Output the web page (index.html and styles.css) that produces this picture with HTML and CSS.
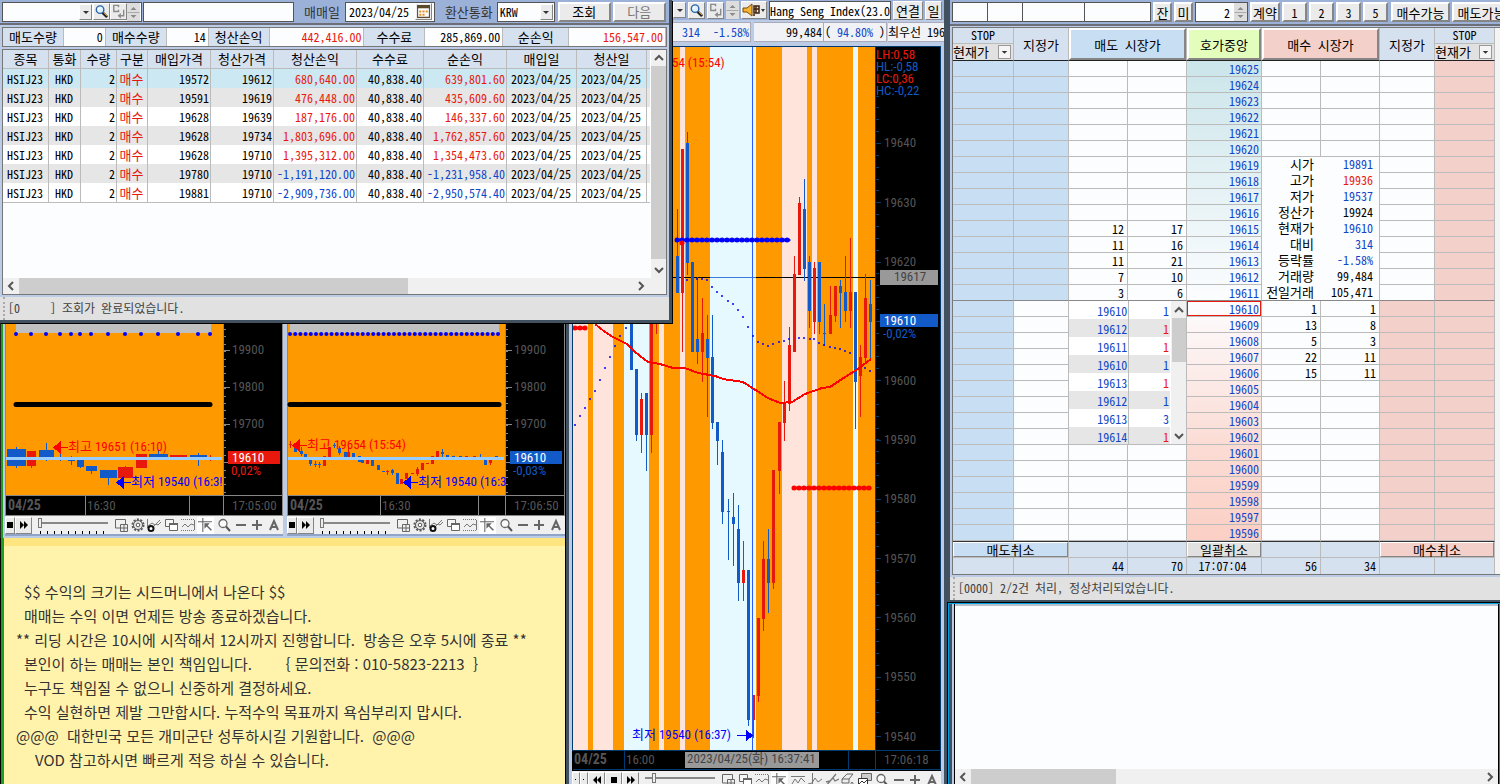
FILE: index.html
```html
<!DOCTYPE html>
<html lang="ko">
<head>
<meta charset="utf-8">
<title>해외선물 트레이딩</title>
<link rel="stylesheet" href="styles.css">
</head>
<body>
<svg class="defs" aria-hidden="true">
  <symbol id="i-down" viewBox="0 0 12 12"><path d="M3 5h6L6 8z" fill="#333"/></symbol>
  <symbol id="i-search" viewBox="0 0 16 16"><path d="M9 9l5 5" stroke="#222" stroke-width="3"/><path d="M10 9l4 4" stroke="#d9a23a" stroke-width="1"/><circle cx="6.500" cy="6" r="4" fill="#dff2fd" stroke="#2a63a8" stroke-width="1.500"/><path d="M4 6l2-2" stroke="#fff" stroke-width="1.500"/></symbol>
  <symbol id="i-code" viewBox="0 0 16 16"><path d="M8 3.500V1.500H3v6.500h5V6" fill="none" stroke="#8a8a8a" stroke-width="1.500"/><path d="M13.500 6v6.500H10" fill="none" stroke="#8a8a8a" stroke-width="1.500"/><path d="M10.500 9.500v6l-3.500-3z" fill="#8a8a8a"/></symbol>
  <symbol id="i-spin" viewBox="0 0 12 18"><path d="M3 7h6L6 4zM3 12h6l-3 3z" fill="#8a8a8a"/><path d="M0 9.500h12" stroke="#aaa"/></symbol>
  <symbol id="i-horn" viewBox="0 0 24 16"><path d="M1 6h4l5-4v12L5 10H1z" fill="#f5b52e" stroke="#7a4a08"/><path d="M12 4h5v7h-5zM14 4v7M12 7h5M12 12v2" fill="none" stroke="#40230a" stroke-width="1.500"/><path d="M19 7h4l-2 3z" fill="#333"/></symbol>
  <symbol id="i-cal" viewBox="0 0 14 14"><path d="M1.500 1.500h11v11h-11z" fill="#fff" stroke="#5b4a2a"/><path d="M1 1h12v3H1z" fill="#5b4a2a"/><path d="M3 6h2v2H3zM6 6h2v2H6zM9 6h2v2H9zM3 9h2v2H3zM6 9h2v2H6z" fill="#e0932b"/></symbol>
  <symbol id="i-up2" viewBox="0 0 10 10"><path d="M1 7l4-4 4 4" fill="none" stroke="#555" stroke-width="2"/></symbol>
  <symbol id="i-dn2" viewBox="0 0 10 10"><path d="M1 3l4 4 4-4" fill="none" stroke="#555" stroke-width="2"/></symbol>
  <symbol id="i-lf2" viewBox="0 0 10 10"><path d="M7 1L3 5l4 4" fill="none" stroke="#555" stroke-width="2"/></symbol>
  <symbol id="i-rt2" viewBox="0 0 10 10"><path d="M3 1l4 4-4 4" fill="none" stroke="#555" stroke-width="2"/></symbol>
  <symbol id="i-stop" viewBox="0 0 14 14"><path d="M4 4h6v6H4z"/></symbol>
  <symbol id="i-dot" viewBox="0 0 14 14"><path d="M6 6h1v1H6z"/></symbol>
  <symbol id="i-ff" viewBox="0 0 14 14"><path d="M3 3l4 4-4 4zM7 3l4 4-4 4z"/></symbol>
  <symbol id="i-rew" viewBox="0 0 14 14"><path d="M7 3L3 7l4 4zM11 3L7 7l4 4z"/></symbol>
  <symbol id="i-add" viewBox="0 0 14 14"><path d="M6 10H1.500V1.500h10V6M6.500 6.500h7v7h-7zM10 7v6M7 10h6" fill="none" stroke="#666"/></symbol>
  <symbol id="i-gear" viewBox="0 0 14 14"><circle cx="7" cy="7" r="5.500" fill="none" stroke="#555" stroke-width="2" stroke-dasharray="2 1.450"/><circle cx="7" cy="7" r="4.500" fill="#e6e6e6" stroke="#555"/><circle cx="7" cy="7" r="1.800" fill="#fff" stroke="#555"/></symbol>
  <symbol id="i-ind" viewBox="0 0 14 14"><path d="M.5 1v9M1 8l4-3 3 2 5-5M6 9l3-3 2 1 3-3" fill="none" stroke="#777"/><circle cx="4" cy="10.500" r="2.500" fill="#fff" stroke="#111" stroke-width="2"/></symbol>
  <symbol id="i-win" viewBox="0 0 14 14"><path d="M1.500 1.500h8v7h-8z" fill="#f5f5f5" stroke="#666"/><path d="M5.500 5.500h8v7h-8z" fill="#fff" stroke="#666"/><path d="M5 6h9" stroke="#666" stroke-width="2"/></symbol>
  <symbol id="i-dash" viewBox="0 0 14 14"><path d="M0 1.500h14M0 12.500h14" stroke="#777" stroke-dasharray="1 1"/><path d="M1 9l3-3 3 3 3-3 3 1M13.500 2v10" fill="none" stroke="#777"/></symbol>
  <symbol id="i-ptr" viewBox="0 0 14 14"><path d="M0 3.500h13M4.500 0v13" stroke="#666"/><path d="M6 5h5L9 7l4 4-1 1-4-4-2 2z" fill="#666"/></symbol>
  <symbol id="i-mag" viewBox="0 0 14 14"><circle cx="6" cy="5.500" r="4" fill="#fafafa" stroke="#666" stroke-width="1.300"/><path d="M9 8.500l4 4.500" stroke="#555" stroke-width="2"/></symbol>
  <symbol id="i-min" viewBox="0 0 14 14"><path d="M2 6h10v2H2z" fill="#666"/></symbol>
  <symbol id="i-plus" viewBox="0 0 14 14"><path d="M2 6h10v2H2zM6 2h2v10H6z" fill="#666"/></symbol>
  <symbol id="i-a" viewBox="0 0 14 14"><path d="M3 12L7 3l4 9M4.500 9h5" fill="none" stroke="#666" stroke-width="2"/></symbol>
  <symbol id="i-l1" viewBox="0 0 14 14"><path d="M0 3.500h14M1 11l3-5 3 4 3-5 4 4" fill="none" stroke="#777"/></symbol>
  <symbol id="i-l2" viewBox="0 0 14 14"><path d="M4.500 0v13M0 11l4-1 3-5 3 4 4-3" fill="none" stroke="#777"/></symbol>
  <symbol id="i-l3" viewBox="0 0 14 14"><path d="M1 13L11 1M1 9l4-1 3-3 2 3 4-2" fill="none" stroke="#777" stroke-width="1.300"/></symbol>
  <symbol id="i-er" viewBox="0 0 14 14"><path d="M1 6l5-5h6L8 6v4H1zM1 6h7M9 12l2-3 2 3" fill="#eee" stroke="#666"/></symbol>
  <symbol id="i-ch" viewBox="0 0 14 14"><path d="M3.500.500h10v7h-10z" fill="#ccc" stroke="#666"/><path d="M.5 5.500h9v8h-9z" fill="#fff" stroke="#333"/><path d="M1 11l3-3 2 2 3-3" fill="none" stroke="#333"/></symbol>
</svg>

<main class="desk">

<section class="win orders">
  <div class="bar">
    <div class="boxes"><input class="w1" aria-label="계좌"><input class="w1" aria-label="구분"><input class="w2" aria-label="종목"><input class="w2" aria-label="비밀번호"></div>
    <button>잔</button><button>미</button>
    <span class="field qty"><input value="2" aria-label="주문수량"><svg class="spin"><use href="#i-spin"/></svg></span>
    <button class="wd">계약</button><button class="n">1</button><button class="n">2</button><button class="n">3</button><button class="n">5</button>
    <button class="cap">매수가능</button><button class="cap2">매도가능</button>
  </div>
  <div class="ladderbox">
  <table class="ladder">
    <colgroup><col class="c61"><col class="c55"><col class="c59"><col class="c59"><col class="c75"><col class="c59"><col class="c59"><col class="c55"><col class="c60"></colgroup>
    <thead><tr>
      <th class="stop"><label for="s1">STOP</label><span class="drop"><select id="s1"><option>현재가</option></select><svg><use href="#i-down"/></svg></span></th>
      <th>지정가</th>
      <th colspan="2"><button class="sell">매도 시장가</button></th>
      <th><button class="mid">호가중앙</button></th>
      <th colspan="2"><button class="buy">매수 시장가</button></th>
      <th>지정가</th>
      <th class="stop"><label for="s2">STOP</label><span class="drop"><select id="s2"><option>현재가</option></select><svg><use href="#i-down"/></svg></span></th>
    </tr></thead>
    <tbody class="asks">
      <tr><td><td><td><td><td class="p">19625<td><td><td><td></tr>
      <tr><td><td><td><td><td class="p">19624<td><td><td><td></tr>
      <tr><td><td><td><td><td class="p">19623<td><td><td><td></tr>
      <tr><td><td><td><td><td class="p">19622<td><td><td><td></tr>
      <tr><td><td><td><td><td class="p">19621<td><td><td><td></tr>
      <tr><td><td><td><td><td class="p">19620<td><td><td><td></tr>
      <tr><td><td><td><td><td class="p">19619<td colspan="2" rowspan="9" class="info">
        <dl><dt>시가<dd class="b">19891<dt>고가<dd class="r">19936<dt>저가<dd class="b">19537<dt>정산가<dd>19924<dt>현재가<dd class="b">19610<dt>대비<dd class="b">314<dt>등락률<dd class="b">-1.58%<dt>거래량<dd>99,484<dt>전일거래<dd>105,471</dl>
        <td><td></tr>
      <tr><td><td><td><td><td class="p">19618<td><td></tr>
      <tr><td><td><td><td><td class="p">19617<td><td></tr>
      <tr><td><td><td><td><td class="p">19616<td><td></tr>
      <tr><td><td><td>12<td>17<td class="p">19615<td><td></tr>
      <tr><td><td><td>11<td>16<td class="p">19614<td><td></tr>
      <tr><td><td><td>11<td>21<td class="p">19613<td><td></tr>
      <tr><td><td><td>7<td>10<td class="p">19612<td><td></tr>
      <tr><td><td><td>3<td>6<td class="p">19611<td><td></tr>
    </tbody>
    <tbody class="bids">
      <tr><td><td><td colspan="2" rowspan="9" class="ticks"><div class="tickbox">
        <table class="tick"><tr><td>19610<td>1<tr><td>19612<td class="r">1<tr><td>19611<td class="r">1<tr><td>19610<td>1<tr><td>19613<td class="r">1<tr><td>19612<td>1<tr><td>19613<td>3<tr><td>19614<td class="r">1</table>
        <div class="vs"><svg><use href="#i-up2"/></svg><i></i><svg><use href="#i-dn2"/></svg></div></div>
        <td class="p now">19610<td>1<td>1<td><td></tr>
      <tr><td><td><td class="p">19609<td>13<td>8<td><td></tr>
      <tr><td><td><td class="p">19608<td>5<td>3<td><td></tr>
      <tr><td><td><td class="p">19607<td>22<td>11<td><td></tr>
      <tr><td><td><td class="p">19606<td>15<td>11<td><td></tr>
      <tr><td><td><td class="p">19605<td><td><td><td></tr>
      <tr><td><td><td class="p">19604<td><td><td><td></tr>
      <tr><td><td><td class="p">19603<td><td><td><td></tr>
      <tr><td><td><td class="p">19602<td><td><td><td></tr>
      <tr><td><td><td><td><td class="p">19601<td><td><td><td></tr>
      <tr><td><td><td><td><td class="p">19600<td><td><td><td></tr>
      <tr><td><td><td><td><td class="p">19599<td><td><td><td></tr>
      <tr><td><td><td><td><td class="p">19598<td><td><td><td></tr>
      <tr><td><td><td><td><td class="p">19597<td><td><td><td></tr>
      <tr><td><td><td><td><td class="p">19596<td><td><td><td></tr>
    </tbody>
    <tfoot>
      <tr><td colspan="2"><button class="sell">매도취소</button><td><td><td><button class="all">일괄취소</button><td><td><td colspan="2"><button class="buy">매수취소</button></tr>
      <tr><td><td><td>44<td>70<td class="c">17:07:04<td>56<td>34<td><td></tr>
    </tfoot>
  </table>
  </div>
  <p class="status">[0000] 2/2건 처리, 정상처리되었습니다.</p>
</section>

<section class="blank">
  <div class="area"></div>
  <div class="hs"><svg><use href="#i-lf2"/></svg><i></i><svg><use href="#i-rt2"/></svg></div>
</section>

<section class="mainchart">
  <div class="tools top">
    <span class="btn s"><svg><use href="#i-down"/></svg></span>
    <button class="ic" aria-label="종목검색"><svg><use href="#i-search"/></svg></button>
    <button class="ic" aria-label="코드"><svg><use href="#i-code"/></svg></button>
    <svg class="spin"><use href="#i-spin"/></svg>
    <button class="horn" aria-label="알림"><svg><use href="#i-horn"/></svg></button>
    <span class="name">Hang Seng Index(23.0</span>
    <button class="ko w">연결</button><button class="ko">일</button><span class="btn s"></span>
  </div>
  <div class="quote"><span class="q1 b">314</span><span class="q2 b">-1.58%</span><span class="q3">99,484</span><span class="q4">( <b class="b">94.80%</b> )</span><span class="q5">최우선 196</span></div>
  <svg class="plot" viewBox="572 46 369 725" shape-rendering="crispEdges" role="img" aria-label="Hang Seng Index 차트">
    <rect x="572" y="46" width="369" height="725" fill="#000"/>
    <rect x="573" y="47" width="302" height="703" fill="#f90"/>
    <path fill="#ffe4dc" d="M573 47h15v703h-15zM593 47h20v703h-20zM659 47h5v703h-5zM680 47h5v703h-5zM782 47h25v703h-25zM812 47h5v703h-5z"/>
    <path fill="#e6f9ff" d="M624 47h25v703h-25zM710 47h46v703h-46zM853 47h5v703h-5z"/>
    <path d="M573 277.500H875" stroke="#000"/><path d="M624 277.500h25M710 277.500h46" stroke="#3d7ae0"/>
    <path stroke="#115ac8" fill="none" d="M631.500 310V370M636.500 369V441M646.500 393V471M677.500 209V293M687.500 132V275M692.500 262V352M697.500 277V364M707.500 315V417M712.500 315V429M717.500 422V465M722.500 440V524M728.500 499V560M733.500 493V566M738.500 505V601M748.500 570V726M768.500 529V613M804.500 179V281M809.500 256V328M819.500 262V334M824.500 304V346M840.500 280V328M845.500 256V322M855.500 292V429M870.500 280V359M727 511.500h3M823 333.500h3"/>
    <path fill="#115ac8" d="M630 310h3v60h-3zM635 369h3v66h-3zM645 393h3v42h-3zM676 256h3v37h-3zM686 143h3v120h-3zM691 262h3v90h-3zM696 339h3v13h-3zM706 339h3v19h-3zM711 357h3v66h-3zM716 422h3v19h-3zM721 452h3v60h-3zM732 517h3v7h-3zM737 529h3v54h-3zM747 570h3v150h-3zM767 559h3v24h-3zM803 209h3v60h-3zM808 262h3v49h-3zM818 262h3v60h-3zM839 286h3v7h-3zM844 292h3v19h-3zM854 292h3v90h-3zM869 304h3v18h-3z"/>
    <path stroke="#e8190c" fill="none" d="M641.500 393V453M651.500 300V453M656.500 300V334M682.500 149V352M702.500 298V382M743.500 541V601M753.500 695V738M758.500 618V702M763.500 541V631M773.500 470V589M779.500 422V494M784.500 381V441M789.500 327V411M794.500 256V352M799.500 197V275M814.500 262V334M830.500 286V334M835.500 286V322M850.500 238V328M860.500 345V417M865.500 274V362"/>
    <path fill="#e8190c" d="M640 399h3v36h-3zM650 300h3v135h-3zM681 149h3v144h-3zM701 333h3v19h-3zM742 570h3v13h-3zM752 695h3v25h-3zM757 618h3v78h-3zM762 559h3v60h-3zM772 470h3v113h-3zM778 422h3v49h-3zM783 403h3v20h-3zM788 345h3v59h-3zM793 274h3v78h-3zM798 203h3v72h-3zM813 268h3v54h-3zM829 315h3v19h-3zM834 286h3v30h-3zM849 292h3v19h-3zM859 357h3v19h-3zM864 298h3v60h-3z"/>
    <path d="M752.500 47V750" stroke="#2b5bff"/>
    <path fill="none" stroke="#f00" stroke-width="2" stroke-linejoin="round" d="M595 324L605 332 613 337 627 344 635 352 648 362 660 364 673 368 685 368 698 373 715 376 723 379 743 382 757 391 768 398 780 403 792 402 805 394 822 388 830 387 845 377 858 369 871 359"/>
    <g shape-rendering="auto" fill="none" stroke-linecap="round">
      <path stroke="#00f" stroke-width="2" d="M575 425h0M580 416h0M585 408h0M590 399h0M595 391h0M600 380h0M605 368h0M610 357h0M615 346h0M620 336h0M626 328h0M687 280h0M697 279h0M702 279h0M707 280h0M712 287h0M717 292h0M722 296h0M728 301h0M733 304h0M738 310h0M743 317h0M748 327h0M753 336h0M758 342h0M763 344h0M768 346h0M773 344h0M779 342h0M784 341h0M789 339h0M799 338h0M804 338h0M810 339h0M814 339h0M819 343h0M824 345h0M830 347h0M835 348h0M840 349h0M845 351h0M850 353h0M865 368h0M870 371h0"/>
      <path stroke="#00f" stroke-width="5" stroke-dasharray="0 5" d="M677 240H791"/><path stroke="#00f" stroke-width="3" d="M677 240H789"/>
      <path stroke="#f00" stroke-width="5" stroke-dasharray="0 5" d="M682 243h1M575 328H587M794 488H870"/><path stroke="#f00" stroke-width="3" d="M575 328H585M794 488H870"/>
    </g>
    <text x="672" y="67" class="red">54 (15:54)</text>
    <text x="632" y="739" class="blue">최저 19540 (16:37)</text><path d="M737 735.500h10M746 730v11l6-5.500z" fill="#00f" stroke="#00f"/>
    <g class="ax"><text x="884" y="147">19640</text><text x="884" y="207">19630</text><text x="884" y="266">19620</text><text x="884" y="385">19600</text><text x="884" y="444">19590</text><text x="884" y="503">19580</text><text x="884" y="563">19570</text><text x="884" y="622">19560</text><text x="884" y="681">19550</text><text x="884" y="741">19540</text></g>
    <path fill="none" stroke="#003a70" d="M572.500 750V46.500H940.500V769.500H572.500M572 750.500H941M875.500 46V770M624.500 750V770M848.500 750V770"/>
    <path d="M878.500 143V738" stroke="#003a70" stroke-width="5" stroke-dasharray="1 58.300"/><path d="M877 95.500V748" stroke="#003a70" stroke-width="3" stroke-dasharray="1 10.860"/>
    <g><text x="876" y="59" class="hr">LH:0,58</text><text x="876" y="71" class="hb">HL:-0,58</text><text x="876" y="83" class="hr">LC:0,36</text><text x="876" y="95" class="hb">HC:-0,22</text></g>
    <rect x="880" y="270" width="58" height="15" fill="#999"/><text x="894" y="281" class="dk">19617</text>
    <rect x="880" y="314" width="58" height="13" fill="#115ac8"/><text x="884" y="325" class="wh">19610</text><text x="883" y="338" class="hb">-0,02%</text>
    <text x="574" y="764" class="day">04/25</text><text x="626" y="764" class="gr">16:00</text>
    <rect x="685" y="752" width="134" height="16" fill="#999"/><text x="687" y="763" class="dk">2023/04/25(화) 16:37:41</text><text x="884" y="764" class="gr">17:06:18</text>
  </svg>
  <div class="tools play wide">
    <button class="s" aria-label="처음"><svg><use href="#i-dot"/></svg></button><button class="s" aria-label="이전"><svg><use href="#i-dot"/></svg></button><button aria-label="뒤로"><svg><use href="#i-rew"/></svg></button><button aria-label="정지"><svg><use href="#i-stop"/></svg></button><button aria-label="앞으로"><svg><use href="#i-ff"/></svg></button>
    <input type="range" min="0" max="10" value="1" aria-label="재생 속도">
    <span class="icons"><svg><use href="#i-add"/></svg><svg><use href="#i-win"/></svg><svg><use href="#i-dash"/></svg><svg class="on"><use href="#i-ptr"/></svg><svg><use href="#i-l1"/></svg><svg><use href="#i-l2"/></svg><svg><use href="#i-l3"/></svg><svg><use href="#i-er"/></svg><svg><use href="#i-ch"/></svg><svg><use href="#i-mag"/></svg><svg><use href="#i-min"/></svg><svg><use href="#i-plus"/></svg><svg><use href="#i-a"/></svg></span>
  </div>
</section>

<section class="minis">
  <div class="mini">
    <svg class="plot" viewBox="5 318 278 198" shape-rendering="crispEdges" role="img" aria-label="틱 차트 1">
      <rect x="5" y="318" width="278" height="198"/><rect x="6" y="318" width="217" height="177" fill="#f90"/><rect x="16" y="318" width="195" height="15" fill="#c0c0c0"/>
      <path d="M5.500 318V516M223.500 318V516M5 495.500H282.500M85.500 495V516M189.500 495V516M282.500 318V516M5 515.500H283M224 350.500h6M224 387.500h6M224 424.500h6M224 462.500h6" fill="none" stroke="#888"/>
      <path d="M225 329V495" stroke="#888" stroke-width="2" stroke-dasharray="1 6.400"/>
      <path fill="#115ac8" d="M7 449h19v17H7zM16 447h1v21h-1zM39 450h15v7H39zM46 443h1v18h-1zM60 447h1v14h-1zM68 460h7v1h-7zM71 456h1v9h-1zM77 460h7v7h-7zM80 460h1v8h-1zM86 466h11v5H86zM91 466h1v8h-1zM100 470h17v8h-17zM108 470h1v15h-1zM149 454h19v4h-19zM158 449h1v8h-1zM190 455h17v3h-17zM198 453h1v13h-1z"/>
      <path fill="#e8190c" d="M27 451h9v15h-9zM31 451h1v17h-1zM118 467h15v11h-15zM125 466h1v12h-1zM136 454h11v14h-11zM170 455h17v3h-17zM210 455h1v6h-1z"/>
      <rect x="6" y="457" width="216" height="3" fill="#9cf"/>
      <g shape-rendering="auto" stroke-linecap="round" fill="none"><path d="M16 334h0M31 334h0M46 334h0M60 334h0M71 334h0M80 334h0M91 334h0M108 334h0M125 334h0M141 334h0M158 334h0M178 334h0M198 334h0M210 334h0" stroke="#00f" stroke-width="4"/><path d="M16 404.500H210" stroke="#000" stroke-width="5"/></g>
      <path d="M54 447.500l6-5.500v11zM60 447.500h8" fill="#f00" stroke="#f00"/><text x="68" y="451" class="red">최고 19651 (16:10)</text>
      <path d="M117 482.500l6-5.500v11zM122 482.500h9" fill="#00f" stroke="#00f"/>
      <text x="131" y="486" class="blue">최저 19540 (16:3!</text>
      <g class="ax"><text x="232" y="354">19900</text><text x="232" y="391">19800</text><text x="232" y="428">19700</text></g>
      <rect x="228" y="451" width="52" height="13" fill="#e8190c"/><text x="232" y="462" class="wh">19610</text><text x="231" y="475" class="hr">0,02%</text>
      <text x="8" y="510" class="day">04/25</text><text x="87" y="510" class="gr">16:30</text><text x="232" y="510" class="gr">17:05:00</text>
    </svg>
    <div class="tools play">
      <button class="s" aria-label="정지"><svg><use href="#i-stop"/></svg></button><button aria-label="앞으로"><svg><use href="#i-ff"/></svg></button>
      <input type="range" min="0" max="10" value="0" aria-label="재생 속도">
      <span class="icons"><svg><use href="#i-add"/></svg><svg><use href="#i-gear"/></svg><svg><use href="#i-ind"/></svg><svg><use href="#i-win"/></svg><svg><use href="#i-dash"/></svg><svg class="on"><use href="#i-ptr"/></svg><svg><use href="#i-mag"/></svg><svg><use href="#i-min"/></svg><svg><use href="#i-plus"/></svg><svg><use href="#i-a"/></svg></span>
    </div>
  </div>
  <div class="mini">
    <svg class="plot" viewBox="287 318 278 198" shape-rendering="crispEdges" role="img" aria-label="틱 차트 2">
      <rect x="287" y="318" width="278" height="198"/><rect x="288" y="318" width="217" height="177" fill="#f90"/><rect x="290" y="318" width="209" height="15" fill="#c0c0c0"/>
      <path d="M287.500 318V516M505.500 318V516M287 495.500H564.500M380.500 495V516M478.500 495V516M564.500 318V516M287 515.500H565M506 350.500h6M506 387.500h6M506 424.500h6M506 462.500h6" fill="none" stroke="#888"/>
      <path d="M507 329V495" stroke="#888" stroke-width="2" stroke-dasharray="1 6.400"/>
      <path fill="#115ac8" d="M294 444h3v8h-3zM301 447h1v9h-1zM300 451h3v3h-3zM304 454h3v3h-3zM309 458h3v6h-3zM310 457h1v9h-1zM314 464h3v1h-3zM315 461h1v6h-1zM318 464h3v1h-3zM319 462h1v6h-1zM333 445h3v1h-3zM334 443h1v5h-1zM338 448h3v5h-3zM339 446h1v9h-1zM344 452h3v8h-3zM352 453h3v4h-3zM358 456h3v6h-3zM361 460h3v3h-3zM371 460h3v6h-3zM377 465h3v5h-3zM382 471h3v1h-3zM391 470h3v3h-3zM392 469h1v6h-1zM396 473h3v11h-3zM441 452h3v2h-3zM442 449h1v8h-1zM446 455h3v2h-3zM452 456h3v1h-3zM459 456h3v1h-3zM480 454h1v3h-1zM484 458h3v7h-3zM495 456h3v1h-3z"/>
      <path fill="#e8190c" d="M289 444h3v1h-3zM290 441h1v7h-1zM323 456h3v10h-3zM328 447h3v10h-3zM347 452h3v6h-3zM348 446h1v14h-1zM366 460h3v4h-3zM387 470h1v5h-1zM386 471h3v1h-3zM400 479h3v5h-3zM405 473h3v6h-3zM411 473h3v1h-3zM416 469h3v5h-3zM417 467h1v9h-1zM421 463h3v7h-3zM426 463h3v1h-3zM431 456h3v8h-3zM436 451h3v6h-3zM465 456h3v1h-3zM473 456h3v1h-3zM489 460h3v3h-3zM490 459h1v6h-1z"/>
      <rect x="288" y="457" width="216" height="3" fill="#9cf"/>
      <g shape-rendering="auto" stroke-linecap="round" fill="none"><path d="M290 334H499" stroke="#00f" stroke-width="4" stroke-dasharray="0 5.200"/><path d="M290 404.500H499" stroke="#000" stroke-width="5"/></g>
      <path d="M293 445.500l6-5.500v11zM299 445.500h8" fill="#f00" stroke="#f00"/><text x="307" y="449" class="red">최고 19654 (15:54)</text>
      <path d="M404 482.500l6-5.500v11zM409 482.500h9" fill="#00f" stroke="#00f"/>
      <text x="418" y="486" class="blue">최저 19540 (16:3</text>
      <g class="ax"><text x="514" y="354">19900</text><text x="514" y="391">19800</text><text x="514" y="428">19700</text></g>
      <rect x="510" y="451" width="52" height="13" fill="#115ac8"/><text x="514" y="462" class="wh">19610</text><text x="513" y="475" class="hb">-0,03%</text>
      <text x="290" y="510" class="day">04/25</text><text x="382" y="510" class="gr">16:30</text><text x="514" y="510" class="gr">17:06:50</text>
    </svg>
    <div class="tools play">
      <button class="s" aria-label="정지"><svg><use href="#i-stop"/></svg></button><button aria-label="앞으로"><svg><use href="#i-ff"/></svg></button>
      <input type="range" min="0" max="10" value="0" aria-label="재생 속도">
      <span class="icons"><svg><use href="#i-add"/></svg><svg><use href="#i-gear"/></svg><svg><use href="#i-ind"/></svg><svg><use href="#i-win"/></svg><svg><use href="#i-dash"/></svg><svg class="on"><use href="#i-ptr"/></svg><svg><use href="#i-mag"/></svg><svg><use href="#i-min"/></svg><svg><use href="#i-plus"/></svg><svg><use href="#i-a"/></svg></span>
    </div>
  </div>
</section>

<section class="memo">
  <p class="in">$$ 수익의 크기는 시드머니에서 나온다 $$</p>
  <p class="in">매매는 수익 이면 언제든 방송 종료하겠습니다.</p>
  <p>** 리딩 시간은 10시에 시작해서 12시까지 진행합니다.  방송은 오후 5시에 종료 **</p>
  <p class="in">본인이 하는 매매는 본인 책임입니다.        { 문의전화 : 010-5823-2213  }</p>
  <p class="in">누구도 책임질 수 없으니 신중하게 결정하세요.</p>
  <p class="in">수익 실현하면 제발 그만합시다. 누적수익 목표까지 욕심부리지 맙시다.</p>
  <p>@@@  대한민국 모든 개미군단 성투하시길 기원합니다.  @@@</p>
  <p class="in2">VOD 참고하시면 빠르게 적응 하실 수 있습니다.</p>
</section>

<section class="win holdings">
  <div class="bar">
    <span class="field acct"><input aria-label="계좌번호"><button class="s" aria-label="목록"><svg><use href="#i-down"/></svg></button><button class="ic" aria-label="검색"><svg><use href="#i-search"/></svg></button><button class="ic" aria-label="코드"><svg><use href="#i-code"/></svg></button><svg class="spin"><use href="#i-spin"/></svg></span>
    <input class="field owner" aria-label="계좌명">
    <label for="day">매매일</label>
    <span class="field date"><input id="day" value="2023/04/25"><button class="ic" aria-label="달력"><svg><use href="#i-cal"/></svg></button></span>
    <label for="cur">환산통화</label>
    <span class="field cur"><select id="cur"><option>KRW</option></select><span class="btn s"><svg><use href="#i-down"/></svg></span></span>
    <button class="big">조회</button><button class="big off">다음</button>
  </div>
  <div class="sums"><b>매도수량</b><span>0</span><b>매수수량</b><span>14</span><b>청산손익</b><span class="r">442,416.00</span><b>수수료</b><span>285,869.00</span><b>순손익</b><span class="r">156,547.00</span></div>
  <div class="listbox">
    <div class="listrow">
    <div class="listarea">
    <table class="list">
      <colgroup><col class="a1"><col class="a2"><col class="a3"><col class="a4"><col class="a5"><col class="a5"><col class="a7"><col class="a8"><col class="a7"><col class="a10"><col class="a10"><col class="a12"></colgroup>
      <thead><tr><th>종목<th>통화<th>수량<th>구분<th>매입가격<th>청산가격<th>청산손익<th>수수료<th>순손익<th>매입일<th>청산일<th></tr></thead>
      <tbody>
      <tr><td>HSIJ23<td>HKD<td>2<td>매수<td>19572<td>19612<td>680,640.00<td>40,838.40<td>639,801.60<td>2023/04/25<td>2023/04/25<td></tr>
      <tr><td>HSIJ23<td>HKD<td>2<td>매수<td>19591<td>19619<td>476,448.00<td>40,838.40<td>435,609.60<td>2023/04/25<td>2023/04/25<td></tr>
      <tr><td>HSIJ23<td>HKD<td>2<td>매수<td>19628<td>19639<td>187,176.00<td>40,838.40<td>146,337.60<td>2023/04/25<td>2023/04/25<td></tr>
      <tr><td>HSIJ23<td>HKD<td>2<td>매수<td>19628<td>19734<td>1,803,696.00<td>40,838.40<td>1,762,857.60<td>2023/04/25<td>2023/04/25<td></tr>
      <tr><td>HSIJ23<td>HKD<td>2<td>매수<td>19628<td>19710<td>1,395,312.00<td>40,838.40<td>1,354,473.60<td>2023/04/25<td>2023/04/25<td></tr>
      <tr class="neg"><td>HSIJ23<td>HKD<td>2<td>매수<td>19780<td>19710<td>-1,191,120.00<td>40,838.40<td>-1,231,958.40<td>2023/04/25<td>2023/04/25<td></tr>
      <tr class="neg"><td>HSIJ23<td>HKD<td>2<td>매수<td>19881<td>19710<td>-2,909,736.00<td>40,838.40<td>-2,950,574.40<td>2023/04/25<td>2023/04/25<td></tr>
      </tbody>
    </table>
    </div>
    <div class="vs"><svg><use href="#i-up2"/></svg><i></i><svg><use href="#i-dn2"/></svg></div>
    </div>
    <div class="hs"><svg><use href="#i-lf2"/></svg><i></i><svg><use href="#i-rt2"/></svg></div>
  </div>
  <p class="status">[0     ] 조회가 완료되었습니다.</p>
</section>

</main>
</body>
</html>
```

FILE: styles.css
```css
* { box-sizing: border-box; }
body, p, dl, dd { margin: 0; }
body, button, input, select {
  font: 12px/15px "Noto Sans Mono CJK KR", "Noto Sans CJK KR", monospace;
  color: #000;
}
body { background: #000; overflow: hidden; }
.defs { position: absolute; width: 0; height: 0; }
.desk { position: relative; height: 100vh; min-height: 784px; overflow: hidden; }
.r { color: #e8190c; }
.b { color: #1046c8; font-weight: normal; }
svg { display: block; flex: none; }

button, .btn {
  display: flex; align-items: center; justify-content: center; flex: none;
  padding: 0; border: 2px solid; border-color: #fff #858585 #858585 #fff;
  background: #ebebeb; white-space: nowrap;
}
input, select { border: 0; padding: 0; margin: 0; background: transparent; min-width: 0; appearance: none; outline: 0; border-radius: 0; }
.field { display: flex; align-items: center; background: #fcfdff; border: 1px solid #555; height: 20px; }
button svg, .btn svg { width: 12px; height: 12px; }
.ic { width: 17px; height: 17px; border-width: 1px; }
.ic svg { width: 15px; height: 15px; }
.s { width: 13px; height: 16px; border-width: 1px; }
.spin { width: 13px; height: 18px; background: #ddd; }

/* shared window chrome */
.win { position: absolute; background: #bccce6; display: flex; flex-direction: column; }
.bar { display: flex; align-items: center; height: 25px; padding: 0 2px; background: #9bb1d8; border-bottom: 2px solid #6d6f78; overflow: hidden; }
.status { height: 23px; line-height: 21px; padding-left: 3px; margin-left: 3px; background: #e1e1e1; color: #404040; white-space: pre; border-left: 2px dotted #aaa; box-shadow: -3px 0 #e1e1e1; }

/* scroll bars */
.vs, .hs { display: flex; align-items: center; background: #f0f0f0; flex: none; }
.vs { flex-direction: column; }
.vs svg, .hs svg { width: 10px; height: 10px; margin: 3px; }
.vs i, .hs i { background: #cdcdcd; }
.vs svg:last-child { margin-top: auto; }
.hs svg:last-child { margin-left: auto; }

/* holdings window */
.holdings { left: 0; top: 0; width: 672px; border: solid #41515f; border-width: 0 3px 3px 0; box-shadow: 1px 1px #000; }
.acct { width: 140px; padding-right: 1px; }
.acct input { flex: 1; }
.acct .s { margin: 0 1px; }
.owner { width: 151px; margin-left: 1px; }
.bar label { margin-left: 10px; font-size: 13px; color: #333; white-space: nowrap; }
.date { width: 90px; margin-left: 5px; padding: 0 2px 0 3px; }
.date input { flex: 1; width: 60px; }
.cur { width: 58px; margin-left: 4px; padding: 0 1px 0 2px; }
.cur select { flex: 1; }
.big { width: 53px; height: 20px; margin-left: 3px; font-size: 13px; }
.big + .big { margin-left: 2px; }
.big.off { color: #777; }
.sums {
  display: grid; grid-template-columns: 60fr 43fr 60fr 43fr 60fr 96fr 60fr 79fr 65fr 98fr;
  margin: 2px; border: 1px solid #777; height: 20px; line-height: 17px; flex: none;
}
.sums b { background: #d6e1f0; font-weight: normal; font-size: 13px; text-align: center; }
.sums span { background: #fcfdff; text-align: right; padding-right: 2px; border: solid #bbb; border-width: 0 1px; }
.listbox { margin: 0 2px; border: 1px solid #777; height: 246px; display: flex; flex-direction: column; }
.listrow { display: flex; flex: 1; min-height: 0; }
.listarea { flex: 1; background: #fcfdff; }
.listrow .vs { width: 16px; border-left: 1px solid #fff; }
.listrow .vs i { width: 15px; height: 193px; }
.listrow .vs svg { margin: 3px 0; }
.listrow .vs svg:last-child { margin-top: auto; }
.listbox .hs { height: 16px; }
.listbox .hs i { width: 389px; height: 16px; }
.listbox .hs svg:last-child { margin-right: 20px; }
table { border-spacing: 0; table-layout: fixed; width: 100%; }
td, th { padding: 0; font-weight: normal; overflow: hidden; white-space: nowrap; }
.list th, .list td { border-right: 1px solid #bbb; height: 19px; line-height: 16px; }
.list th:last-child, .list td:last-child { border-right: 0; }
.list th { background: #d6e1f0; border-bottom: 1px solid #bbb; font-size: 13px; }
.list td { text-align: right; padding-right: 1px; }
.list td:nth-child(-n+2), .list td:nth-child(4), .list td:nth-child(n+10) { text-align: center; }
.list td:nth-child(4), .list td:nth-child(7), .list td:nth-child(9) { color: #e8190c; }
.list td:nth-child(4) { font-size: 13px; }
.list .neg td:nth-child(7), .list .neg td:nth-child(9) { color: #1046c8; }
.list tbody tr { background: #fff; }
.list tbody tr:nth-child(even) { background: #e6e6e6; }
.list tbody tr:first-child { background: #cbe8f3; }
.list tbody tr:last-child td { border-bottom: 1px solid #bbb; height: 20px; }
.a1 { width: 46px; } .a2 { width: 32px; } .a3 { width: 36px; } .a4 { width: 31px; }
.a5 { width: 63px; } .a7 { width: 83px; } .a8 { width: 67px; } .a10 { width: 70px; } .a12 { width: 3px; }
.holdings .status { margin-top: 2px; }

/* order window */
.orders { left: 947px; right: 0; top: 0; border: solid #41515f; border-width: 0 0 2px 3px; box-shadow: -1px 1px #000; }
.orders .bar { gap: 2px; height: 26px; }
.boxes { display: flex; flex: none; height: 20px; width: 199px; border: 1px solid #555; background: #fcfdff; }
.boxes .w1 { width: 35px; border-right: 1px solid #555; }
.boxes .w2 { width: 62px; border-right: 1px solid #555; }
.boxes .w2:last-child { border: 0; }
.orders .bar button { width: 19px; height: 20px; font-size: 13px; }
.orders .bar .wd { width: 30px; }
.orders .bar .n { width: 25px; font-size: 12px; }
.orders .bar .cap { width: 59px; margin-left: 1px; }
.orders .bar .cap2 { width: 59px; }
.qty { width: 53px; flex: none; }
.qty input { flex: 1; text-align: right; padding-right: 4px; }
.ladderbox { margin: 1px 0 0 2px; border: solid #777; border-width: 1px 0 1px 1px; background: #f4f4f4; padding-right: 5px; }
.c61 { width: 61px; } .c55 { width: 55px; } .c59 { width: 59px; } .c75 { width: 75px; } .c60 { width: 60px; }
.ladder th { height: 33px; background: #d6e1f0; border-right: 1px solid #bbb; border-bottom: 1px solid #222; font-size: 13px; }
.ladder th button { width: 100%; height: 32px; font-size: 13px; }
.stop label { display: block; height: 16px; line-height: 14px; font-size: 12px; border-bottom: 1px solid #bbb; }
.drop { position: relative; display: block; height: 16px; background: #e1e1e1; }
.drop select { display: block; width: 100%; height: 16px; line-height: 14px; font-size: 13px; }
.drop svg { position: absolute; right: 2px; top: 1px; width: 13px; height: 14px; border: 1px solid #999; background: #f5f5f5; pointer-events: none; }
.ladder .sell { background: #c8def2; }
.ladder .buy { background: #f4d0ca; }
.ladder .mid { background: #e3fdbd; }
.ladder > tbody > tr > td, tfoot td { height: 16px; line-height: 14px; border: solid #bbb; border-width: 0 1px 1px 0; text-align: right; padding-right: 3px; background: #fcfdff; }
.ladder > tbody > tr > td:first-child, .asks td:nth-child(2) { background: #c8def2; }
.ladder > tbody.asks > tr > td:nth-child(2) { background: #c8def2; }
.ladder > tbody > tr > td:last-child, .ladder > .bids > tr > td:nth-last-child(2) { background: #f4d0ca; }
.ladder > tbody > tr > td.p { background: none; color: #1046c8; padding-right: 2px; }
.asks { background: linear-gradient(#cbe5ea, #fcfdff); }
.bids { background: linear-gradient(#fdfcff, #fbdcd4 60%, #fbcfc4); }
.ladder > .asks > tr:last-child > td, .ladder > .asks > tr > td.info { border-bottom-color: #888; }
.ladder > .bids > tr > td.now { box-shadow: inset 0 0 0 1px #e8190c; }
.ladder > .asks > tr > td.info { overflow: visible; vertical-align: top; padding: 0; }
.info dl { display: grid; grid-template-columns: 52px 1fr; grid-auto-rows: 16px; height: 143px; padding-right: 6px; }
.info dt { font-size: 13px; }
.ladder > .bids > tr > td.ticks { padding: 0; }
.tickbox { display: flex; height: 143px; }
.tick { flex: 1; width: auto; }
.tick td { height: 18px; line-height: 15px; width: 59px; border-right: 1px solid #bbb; color: #1046c8; padding-right: 1px; }
.tick td + td { width: 41px; border-color: #fff; }
.tick td.r { color: #e8190c; }
.tick tr { background: #fff; }
.tick tr:nth-child(even) { background: #e6e6e6; }
.tickbox .vs { width: 15px; }
.tickbox .vs svg { margin: 4px 0 3px; }
.tickbox .vs svg:last-child { margin-top: auto; }
.tickbox .vs i { width: 14px; height: 44px; }
.ladder tfoot td { background: #d6e1f0; }
.ladder tfoot td.c { text-align: center; }
.ladder tfoot tr:first-child td { padding: 0; border-top: 1px solid #333; overflow: visible; }
.ladder tfoot tr:last-child td { border-bottom: 0; }
.ladder tfoot button { width: 100%; height: 15px; line-height: 13px; border-width: 1px; font-size: 13px; }
.ladder tfoot .all { background: #e1e1e1; }
.orders .status { margin-top: 2px; }

/* empty list window */
.blank { position: absolute; left: 949px; right: 0; top: 604px; bottom: 0; display: flex; flex-direction: column; border: solid #41515f; border-width: 0 0 0 3px; outline: 1px solid #00a0e0; box-shadow: inset 2px 0 #bccce6, inset -1px 0 #1e9e1e; padding: 0 2px 0 3px; }
.area { flex: 1; background: #fcfdff; border-top: 2px solid #b8c0cc; }
.blank .hs { height: 15px; }
.blank .hs i { width: 145px; height: 15px; }

/* main chart window */
.mainchart { position: absolute; left: 566px; top: 0; bottom: 0; width: 381px; display: flex; flex-direction: column; border: solid #41515f; border-width: 0 3px; background: #bccce6; overflow: hidden; }
.mainchart .plot { width: 369px; height: 725px; margin-left: 3px; flex: none; }
.tools { display: flex; align-items: center; overflow: hidden; flex: none; }
.top { height: 20px; padding-left: 104px; gap: 2px; background: #9bb1d8; }
.top .horn { width: 26px; height: 18px; border-width: 1px; }
.horn svg { width: 24px; height: 16px; }
.top .name { flex: none; width: 122px; height: 19px; line-height: 17px; background: #fcfdff; border: 1px solid #555; white-space: nowrap; }
.top .ko { height: 19px; width: 17px; font-size: 13px; border-width: 1px; }
.top .w { width: 30px; }
.quote { display: flex; height: 20px; line-height: 18px; margin: 2px 0 4px; padding-left: 104px; overflow: hidden; white-space: nowrap; flex: none; }
.quote span { background: #f0f2f6; border: 1px solid #aab; border-width: 1px 1px 1px 0; flex: none; text-align: right; padding-right: 1px; }
.q1 { width: 28px; } .quote .q1 { border-right: 0; } .q2 { width: 50px; margin-right: 3px; } .q3 { width: 70px; } .q4 { width: 63px; margin-right: 1px; }

/* chart lettering */
.plot text { font: 13px "Roboto Condensed", Roboto, "Noto Sans CJK KR", sans-serif; }
.plot .day { font-size: 14px; font-weight: bold; fill: #555; }
.dk { fill: #444; }
.wh { fill: #fff; }
.red { fill: #f00; }
.blue { fill: #00f; }
.hr { fill: #e8190c; }
.hb { fill: #115ac8; }
.ax text, .gr { fill: #555; }

/* playback strip */
.play { height: 18px; background: #f0f0f0; }
.play button { width: 17px; height: 17px; border-width: 1px; }
.play button svg { width: 14px; height: 14px; }
.play .s { width: 10px; }
.icons { display: flex; flex: 1; justify-content: space-between; align-items: center; padding-right: 2px; }
.icons svg { width: 14px; height: 14px; }
.icons .on { background: #fff; width: 17px; height: 17px; padding: 1px; }
.play input { width: 70px; height: 17px; margin: 0 6px; background: linear-gradient(#888, #888) 0 5px / 100% 2px no-repeat, repeating-linear-gradient(90deg, #000 0 1px, transparent 1px 7px) 2px 14px / 100% 3px no-repeat; }
.play input::-webkit-slider-thumb { appearance: none; width: 4px; height: 10px; margin-bottom: 4px; background: #eee; border: 1px solid #777; }
.wide { margin-left: 3px; margin-right: 3px; }
.wide .s { width: 8px; }

/* mini charts */
.minis { position: absolute; left: 0; top: 318px; width: 565px; display: flex; gap: 4px; padding-left: 4px; height: 220px; background: #bccce6; border-left: 1px solid #222; box-shadow: inset 2px 0 #1e9e1e; }
.mini { flex: 1; display: flex; flex-direction: column; border-bottom: 2px solid #8ea4c9; height: 218px; background: #f0f0f0; }
.mini .plot { width: 100%; height: 198px; }

/* memo */
.memo { position: absolute; left: 1px; top: 538px; bottom: 0; width: 564px; background: #fff2ab; border-left: 3px solid #1e9e1e; padding: 42px 12px 0; box-shadow: inset 0 8px #ffe57f; }
.memo p { font: 15px/24px "Noto Sans CJK KR", sans-serif; color: #333; white-space: pre; }
.memo .in { padding-left: 8px; }
.memo .in2 { padding-left: 19px; }
```
